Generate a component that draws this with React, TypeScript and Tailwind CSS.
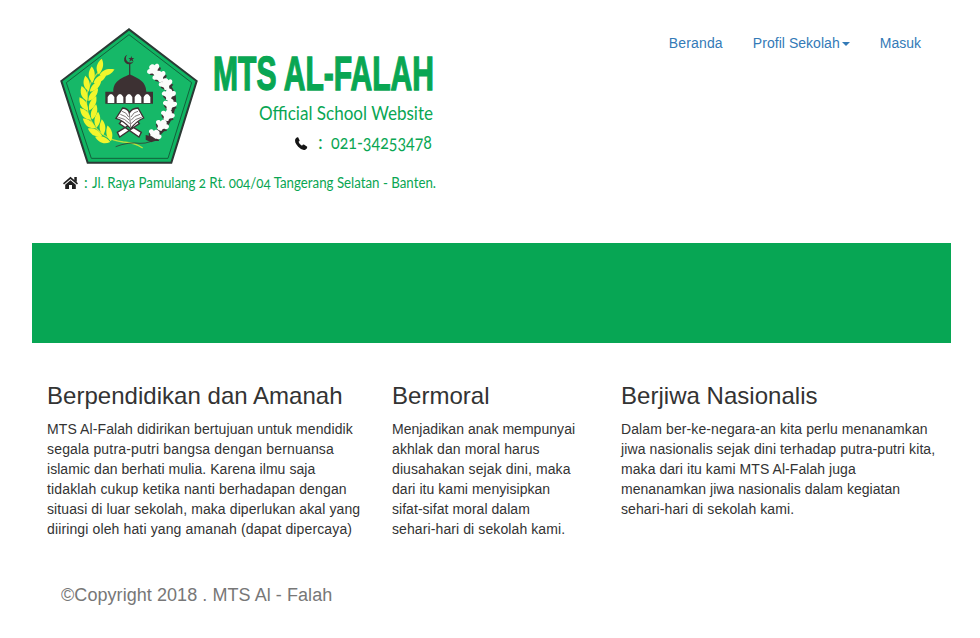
import React from "react";

const leftLeaves = [
  [158, 150, 38], [136, 172, 24], [122, 197, 14], [115, 225, 6], [114, 254, -6], [119, 282, -16], [130, 308, -26], [147, 332, -36], [169, 352, -44],
];

const cotton = [
  [311, 150, -35], [328, 170, -25], [347, 193, -15], [356, 224, 0], [359, 254, 8], [352, 286, 18], [335, 316, 30], [313, 345, 35],
];

function Emblem() {
  return (
    <svg className="h-[150px] w-[160px] shrink-0" viewBox="0 0 480 450" aria-label="MTS Al-Falah">
      <path d="M237 28 440 183 364 428H113L34 183Z" fill="#10b562" stroke="#2b3a35" strokeWidth="6" />
      <path d="M237 44 425 188 354 415H124L49 188Z" fill="#16b868" stroke="#14613c" strokeWidth="3" />
      <path d="M150 152C108 190 98 250 122 300C142 340 180 362 220 366Q255 368 278 384" fill="none" stroke="#b9e03c" strokeWidth="4" />
      {leftLeaves.map(([x, y, r]) => (
        <g key={y} transform={`translate(${x} ${y}) rotate(${r})`} fill="#f2f62c">
          <path d="M-1 18C-22 11-27-6-23-25C-11-19 0-8-1 18Z" />
          <path d="M2 18C-1 0 9-14 27-23C29-4 20 11 2 18Z" />
        </g>
      ))}
      <path d="M197 380Q235 365 270 370Q302 371 325 350" fill="none" stroke="#30523d" strokeWidth="3" />
      <path d="M325 162Q382 210 372 258Q364 310 318 352" fill="none" stroke="#3d3133" strokeWidth="10" />
      {cotton.map(([x, y, r]) => (
        <g key={y} transform={`translate(${x} ${y}) rotate(${r})`}>
          <path d="M-17 6 0 22 22 7 12-4H-12Z" fill="#3d3133" />
          <path d="M-8 15C-6 6-11 5-18 2C-25-4-16-14-8-9C-8-21 10-21 11-10C22-15 26-1 16 4C7 6 8 10 8 15Q0 20-8 15Z" fill="#fafcfa" />
        </g>
      ))}
      <path d="m287 345 18 4 18 12-20 6-16-8Z" fill="#3d3133" />
      <path d="M239 132V170" stroke="#344039" strokeWidth="4" />
      <path d="M232 104A15 15 0 1 0 251 124A12 12 0 1 1 232 104Z" fill="#3d3133" />
      <path d="m244 108 2 6 7 0-5 4 2 7-6-4-6 4 2-7-5-4h7Z" fill="#3d3133" />
      <path d="M190 216C189 180 220 174 239 163C260 174 289 182 289 216Z" fill="#3d3133" />
      <path d="M166 215H309V251H166Z" fill="#3d3133" />
      {[173, 200, 227, 254, 281].map((x) => (
        <path key={x} d={`M${x} 249V231Q${x + 10} 213 ${x + 20} 231V249Z`} fill="#fff" />
      ))}
      <path d="m202 337 58-36 8 10-59 40Z M274 337l-58-36-8 10 59 40Z" fill="#fff" stroke="#3d3133" strokeWidth="4" />
      <path d="M218 264Q235 266 238 279Q245 265 264 264L281 294Q260 303 242 326Q220 301 198 295Z" fill="#fff" stroke="#3d3133" strokeWidth="4" />
      <path d="M238 280 242 321M216 274Q229 276 236 291M211 283Q227 287 238 301M205 292Q225 295 239 311M264 274Q252 274 243 291M270 283Q253 286 243 301M275 292Q256 295 243 311" fill="none" stroke="#635b5b" strokeWidth="2.5" />
    </svg>
  );
}

function Brand() {
  return (
    <div className="w-[400px] text-[#09a653]">
      <div className="flex h-[150px]">
        <Emblem />
        <div className="w-[230px] pt-[26px]">
          <svg className="block h-[56px] w-[230px] overflow-visible" fill="currentColor">
            <text x="3" y="44" fontSize="48" textLength="221" lengthAdjust="spacingAndGlyphs" stroke="currentColor" strokeWidth="1.4" className="font-['Liberation_Sans_Narrow','Liberation_Sans',sans-serif] font-bold">MTS AL-FALAH</text>
          </svg>
          <svg className="-mt-1 block h-[30px] w-[230px] overflow-visible" fill="currentColor">
            <text x="49" y="22" fontSize="20" textLength="174" lengthAdjust="spacingAndGlyphs" className="font-[Lato,sans-serif]">Official School Website</text>
          </svg>
          <svg className="block h-[30px] w-[230px] overflow-visible" fill="currentColor">
            <path transform="translate(85 9) scale(.01 .01)" d="M30 210Q170-30 310 30L470 350Q440 440 350 480Q430 740 700 870Q790 730 890 760L1220 970Q1280 1130 1030 1270Q710 1390 320 980Q-90 550 30 210Z" fill="#151515" />
            <text x="108" y="21" fontSize="19" className="font-[Lato,sans-serif]">:</text>
            <text x="121" y="21" fontSize="19" textLength="101" lengthAdjust="spacingAndGlyphs" className="font-[Lato,sans-serif] oldstyle-nums">021-34253478</text>
          </svg>
        </div>
      </div>
      <svg className="block h-[30px] w-[400px] overflow-visible" fill="currentColor">
        <path d="M13 13.2 20.5 6.8 28 13.2 27 14.5 20.5 9 14 14.5Z M24.3 7h2.5v5l-2.5-2Z M15.2 14.7 20.5 10.2 25.8 14.7V19H22v-4h-3v4h-3.8Z" fill="#202020" />
        <text x="34" y="18" fontSize="14.5" textLength="4" className="font-[Lato,sans-serif]">:</text>
        <text x="42" y="18" fontSize="14.5" textLength="344" lengthAdjust="spacingAndGlyphs" className="font-[Lato,sans-serif] oldstyle-nums">Jl. Raya Pamulang 2 Rt. 004/04 Tangerang Selatan - Banten.</text>
      </svg>
    </div>
  );
}

const columns = [
  {
    title: "Berpendidikan dan Amanah",
    width: "w-[345px]",
    lines: [
      ["MTS Al-Falah didirikan bertujuan untuk mendidik", "tracking-[0.1px]"],
      ["segala putra-putri bangsa dengan bernuansa", "tracking-[0.18px]"],
      ["islamic dan berhati mulia. Karena ilmu saja", "tracking-[0.05px]"],
      ["tidaklah cukup ketika nanti berhadapan dengan", "tracking-[0.14px]"],
      ["situasi di luar sekolah, maka diperlukan akal yang", "tracking-[0.1px]"],
      ["diiringi oleh hati yang amanah (dapat dipercaya)", "tracking-[0.13px]"],
    ],
  },
  {
    title: "Bermoral",
    width: "w-[229px]",
    lines: [
      ["Menjadikan anak mempunyai", "tracking-[0.04px]"],
      ["akhlak dan moral harus", "tracking-[0.1px]"],
      ["diusahakan sejak dini, maka", "tracking-[0.1px]"],
      ["dari itu kami menyisipkan", "tracking-[0.04px]"],
      ["sifat-sifat moral dalam", "tracking-[0.04px]"],
      ["sehari-hari di sekolah kami.", "tracking-[0.1px]"],
    ],
  },
  {
    title: "Berjiwa Nasionalis",
    width: "w-[345px]",
    lines: [
      ["Dalam ber-ke-negara-an kita perlu menanamkan", "tracking-[0.11px]"],
      ["jiwa nasionalis sejak dini terhadap putra-putri kita,", "tracking-[0.1px]"],
      ["maka dari itu kami MTS Al-Falah juga", "tracking-[0.06px]"],
      ["menanamkan jiwa nasionalis dalam kegiatan", "tracking-[0.03px]"],
      ["sehari-hari di sekolah kami.", "tracking-[0.1px]"],
    ],
  },
];

export default function App() {
  return (
    <div className="h-[638px] w-[980px] overflow-hidden bg-white font-['Liberation_Sans',Arial,sans-serif] text-sm leading-5 text-[#333]">
      <header className="flex h-[243px] justify-between pt-5 pr-[59px] pl-[50px]">
        <Brand />
        <nav className="flex h-5 gap-[30px] pt-[13px] text-[#337ab7]">
          <a className="tracking-[0.15px]">Beranda</a>
          <a className="flex items-center gap-[2px] self-start tracking-[0.04px]">
            Profil Sekolah
            <span className="mt-px border-x-4 border-t-4 border-x-transparent border-t-[#337ab7]" />
          </a>
          <a>Masuk</a>
        </nav>
      </header>
      <div className="mr-[29px] ml-8 h-[100px] bg-[#07a654]" />
      <main className="ml-8 flex h-[239px] pt-[40px]">
        {columns.map((c) => (
          <section key={c.title} className={`${c.width} shrink-0 pl-[15px]`}>
            <h2 className="mb-[10px] text-2xl leading-[26px] tracking-[0.03px] whitespace-nowrap">{c.title}</h2>
            {c.lines.map(([text, tracking]) => (
              <p key={text} className={`whitespace-nowrap ${tracking}`}>{text}</p>
            ))}
          </section>
        ))}
      </main>
      <footer className="pt-[3px] pl-[61px] text-lg leading-5 tracking-[0.06px] text-[#777]">©Copyright 2018 . MTS Al - Falah</footer>
    </div>
  );
}
